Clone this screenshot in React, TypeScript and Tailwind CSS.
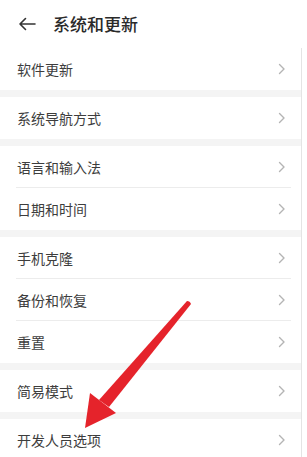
import React from 'react';

const GROUPS: string[][] = [
  ['软件更新'],
  ['系统导航方式'],
  ['语言和输入法', '日期和时间'],
  ['手机克隆', '备份和恢复', '重置'],
  ['简易模式'],
  ['开发人员选项'],
];

const Chevron = () => (
  <svg width="8" height="12" viewBox="0 0 8 12" fill="none">
    <path d="M1.5 1.5 L6 6 L1.5 10.5" stroke="#b4b4b4" strokeWidth="1.4" strokeLinecap="round" strokeLinejoin="round" />
  </svg>
);

const Row = ({ label, divider }: { label: string; divider: boolean }) => (
  <div className="relative flex h-[42px] items-center justify-between pl-[17px] pr-[15px]">
    <span className="text-[14px] text-[#3d3d3d]">{label}</span>
    <Chevron />
    {divider && <div className="absolute bottom-0 left-[16px] right-[10px] h-px bg-[#ececec]" />}
  </div>
);

export default function App() {
  return (
    <div
      className="relative h-[457px] w-[307px] overflow-hidden bg-white"
      style={{ fontFamily: '"Noto Sans CJK SC", "Noto Sans", sans-serif' }}
    >
      <div className="flex h-[48px] items-center gap-[17px] pl-[18px]">
        <svg width="18" height="14" viewBox="0 0 18 14" fill="none">
          <path d="M17 7 H2 M7.5 1.5 L2 7 L7.5 12.5" stroke="#333" strokeWidth="1.6" strokeLinecap="round" strokeLinejoin="round" />
        </svg>
        <span className="text-[17px] font-medium text-[#2a2a2a]">系统和更新</span>
      </div>
      <div className="w-[302px] border-r border-[#e4e4e4]">
        {GROUPS.map((g, gi) => (
          <div key={gi}>
            {gi > 0 && <div className="h-[7px] bg-[#f4f4f4]" />}
            {g.map((label, i) => (
              <Row key={label} label={label} divider={i < g.length - 1} />
            ))}
          </div>
        ))}
      </div>

      {/* red annotation arrow */}
      <svg className="absolute left-0 top-0" width="307" height="457" viewBox="0 0 307 457">
        <path d="M187 301 Q190 301 191 304 L109 407 L99 400 Z" fill="#e5232b" />
        <path d="M85 428 L90 393 L116 413 Z" fill="#e5232b" />
      </svg>
    </div>
  );
}
